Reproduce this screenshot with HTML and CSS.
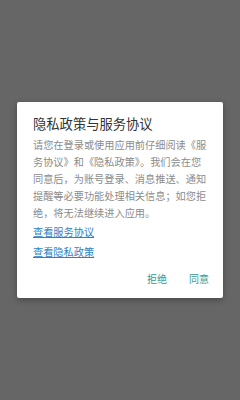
FILE: index.html
```html
<!DOCTYPE html>
<html lang="zh">
<head>
<meta charset="utf-8">
<link rel="stylesheet" href="styles.css">
</head>
<body>
<div class="screen">
  <div class="dialog">
    <h1 class="title">隐私政策与服务协议</h1>
    <p class="text">请您在登录或使用应用前仔细阅读《服务协议》和《隐私政策》。我们会在您同意后，为账号登录、消息推送、通知提醒等必要功能处理相关信息；如您拒绝，将无法继续进入应用。</p>
    <a class="link" href="#">查看服务协议</a>
    <a class="link" href="#">查看隐私政策</a>
    <div class="actions">
      <button class="btn">拒绝</button>
      <button class="btn">同意</button>
    </div>
  </div>
</div>
</body>
</html>
```
FILE: styles.css
```css
html, body {
  margin: 0;
  padding: 0;
}
body {
  font-family: "Noto Sans CJK SC", "Noto Sans", sans-serif;
  background: #666666;
}
.screen {
  width: 240px;
  height: 400px;
  display: flex;
  align-items: center;
  justify-content: center;
  box-sizing: border-box;
}
.dialog {
  width: 206px;
  box-sizing: border-box;
  background: #ffffff;
  border-radius: 2px;
  box-shadow: 0 2px 6px rgba(0, 0, 0, 0.3);
  padding: 13px 16px 5px 16px;
  display: flex;
  flex-direction: column;
}
.title {
  margin: 0;
  font-size: 13.3px;
  line-height: 18px;
  font-weight: 400;
  color: #333333;
}
.text {
  margin: 3.5px 0 2px 0;
  font-size: 10.2px;
  line-height: 17px;
  color: #8c8c8c;
}
.link {
  align-self: flex-start;
  font-size: 10.2px;
  line-height: 17px;
  color: #2f7fc4;
  text-decoration: underline;
  margin-bottom: 3px;
}
.actions {
  display: flex;
  justify-content: flex-end;
  gap: 6px;
  margin-top: 2px;
  margin-right: -10px;
}
.btn {
  font-family: inherit;
  border: none;
  background: transparent;
  font-size: 10px;
  line-height: 28px;
  height: 28px;
  padding: 0 8px;
  color: #3a9a8c;
}
```
